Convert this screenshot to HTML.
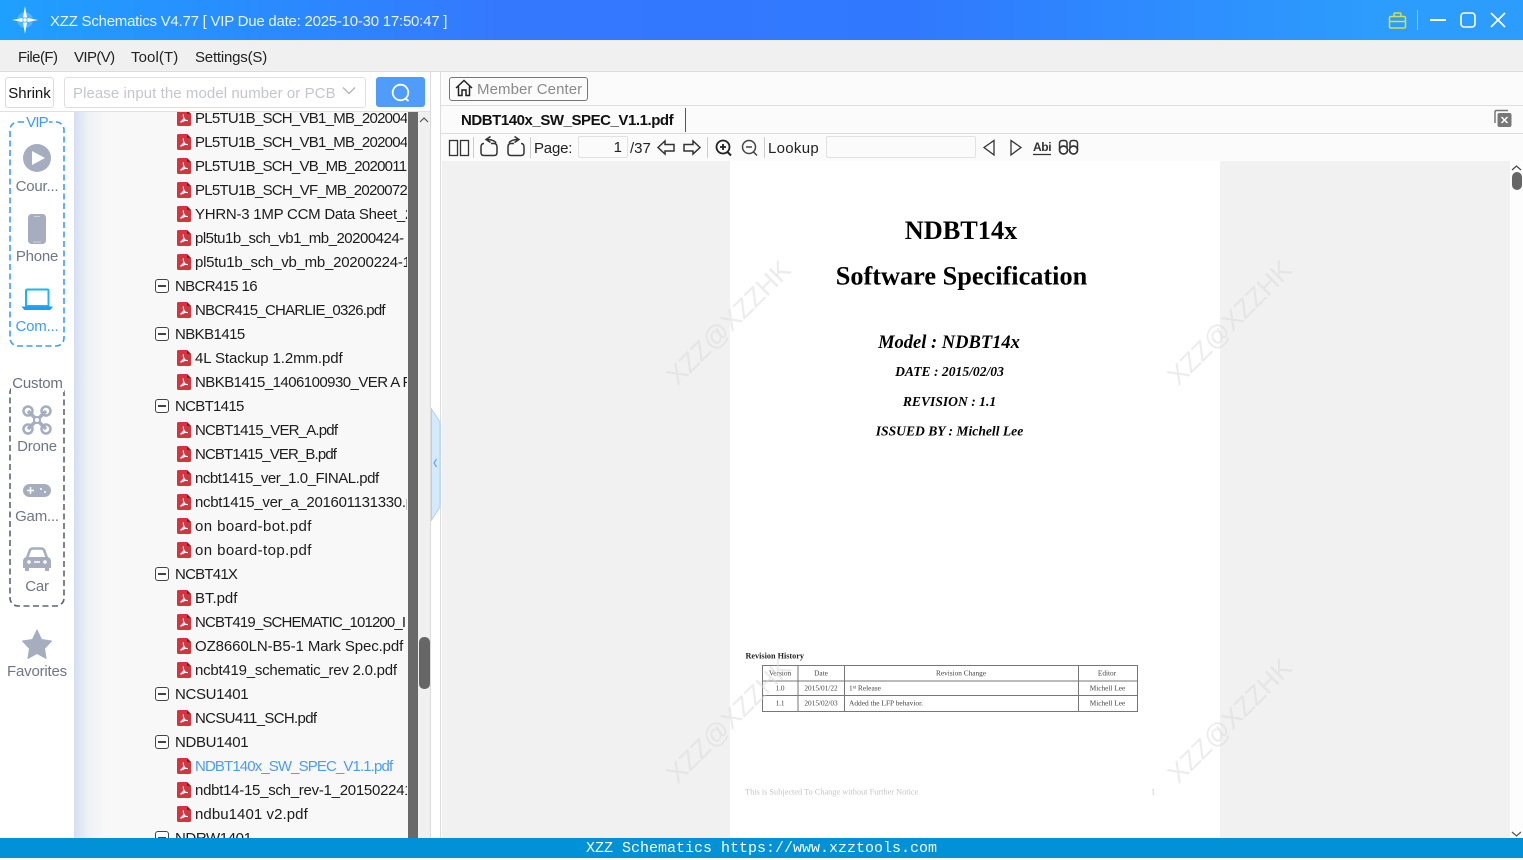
<!DOCTYPE html>
<html><head><meta charset="utf-8"><title>XZZ Schematics</title>
<style>
html,body{margin:0;padding:0;width:1523px;height:858px;overflow:hidden;background:#fff;font-family:"Liberation Sans","Noto Sans CJK SC",sans-serif;color:#222}
.a{position:absolute;white-space:nowrap}
#title{left:0;top:0;width:1523px;height:40px;background:linear-gradient(90deg,#1fa0fe 0,#3478fe 33%,#3079fe 60%,#2c9cfd 90%,#2c9cfd 100%)}
#tree{left:74px;top:112px;width:333px;height:726px;background:linear-gradient(90deg,#d3dff2 0,#eef1f6 14px,#f8f8f8 32px);overflow:hidden}
.r{position:absolute;left:0;right:0;height:24px;line-height:24px;font-size:15px;color:#1c1c1c;white-space:nowrap}
.r svg{position:absolute;left:103px;top:4px}
.r span{position:absolute;left:121px;top:1px;letter-spacing:-.2px}
.r.d span{left:101px}
.r.d i{position:absolute;left:81px;top:5px;width:12px;height:12px;border:1px solid #444;border-radius:3px;background:#fff}
.r.d i:after{content:"";position:absolute;left:2px;right:2px;top:5px;height:2px;background:#444}
.lbl{position:absolute;left:0;width:74px;text-align:center;font-size:15px;line-height:18px;color:#6f7686;letter-spacing:-.2px}
.tb{font-size:15px;color:#222}
</style></head><body>
<svg width="0" height="0" style="position:absolute"><symbol id="p" viewBox="0 0 14 16"><path d="M0 1.5Q0 0 1.5 0H10L14 4V14.500Q14 16 12.500 16H1.500Q0 16 0 14.500Z" fill="#d2353f"/><path d="M10 0V4H14Z" fill="#8e1a22"/><path d="M6.500 4.500Q6 6 7 8.500T11 10.500M7 8Q6.500 10 3.500 12M3.500 12.300L9 10" fill="none" stroke="#fff" stroke-width="1.200"/></symbol></svg>

<div class="a" id="title"></div>
<svg class="a" style="left:10px;top:5px" width="30" height="30" viewBox="0 0 30 30"><circle cx="15" cy="15" r="8" fill="#8fcbff" opacity=".45"/><path d="M15 1L17 12.500H13ZM15 29L13 17.500H17ZM2 15L12.500 13V17ZM28 15L17.500 17V13Z" fill="#fff"/><circle cx="15" cy="15" r="1.800" fill="#fff"/></svg>
<div class="a" style="left:50px;top:12px;font-size:15px;line-height:19px;color:#eaf4ff;letter-spacing:-.235px">XZZ Schematics V4.77 [ VIP Due date: 2025-10-30 17:50:47 ]</div>
<svg class="a" style="left:1385px;top:8px" width="130" height="24" viewBox="0 0 130 24" fill="none"><path d="M6 8.500H19Q20.500 8.500 20.500 10V18.500Q20.500 20 19 20H6Q4.500 20 4.500 18.500V10Q4.500 8.500 6 8.500ZM9 8.500V6Q9 5 10 5H15Q16 5 16 6V8.500M4.500 13.500H20.500M10 13.500H15" stroke="#d5e04b" stroke-width="1.500"/><path d="M32.500 2V22" stroke="#8cc6fb"/><path d="M45 12H61" stroke="#fff" stroke-width="2"/><rect x="76" y="5" width="14" height="14" rx="3" stroke="#fff" stroke-width="1.600"/><path d="M106 5L120 19M120 5L106 19" stroke="#fff" stroke-width="1.700"/></svg>

<div class="a" style="left:0;top:40px;width:1523px;height:31px;background:#f0f0f0;border-bottom:1px solid #dcdcdc"></div>
<div class="a" style="left:18px;top:49px;font-size:15px;line-height:18px;letter-spacing:-.55px">File(F)</div>
<div class="a" style="left:74px;top:49px;font-size:15px;line-height:18px;letter-spacing:-.6px">VIP(V)</div>
<div class="a" style="left:131px;top:49px;font-size:15px;line-height:18px;letter-spacing:.1px">Tool(T)</div>
<div class="a" style="left:195px;top:49px;font-size:15px;line-height:18px;letter-spacing:-.2px">Settings(S)</div>

<div class="a" style="left:0;top:111px;width:430px;height:1px;background:#e0e0e0"></div>
<div class="a" style="left:5px;top:77px;width:47px;height:29px;border:1px solid #dcdcdc;border-radius:3px;text-align:center;font-size:15px;line-height:31px;color:#111">Shrink</div>
<div class="a" style="left:64px;top:77px;width:300px;height:29px;border:1px solid #dfdfdf;border-radius:3px;font-size:15px;line-height:31px;color:#c4c6cc;text-indent:8px;letter-spacing:.07px">Please input the model number or PCB</div>
<svg class="a" style="left:342px;top:86px" width="14" height="10" viewBox="0 0 14 10" fill="none"><path d="M1 1.500L7 7.500L13 1.500" stroke="#b4b6bc" stroke-width="1.400"/></svg>
<div class="a" style="left:376px;top:77px;width:49px;height:30px;background:#4f9cfb;border-radius:3px"></div>
<svg class="a" style="left:390px;top:82px" width="22" height="21" viewBox="0 0 22 21" fill="none"><circle cx="10.500" cy="10.500" r="7.800" stroke="#fff" stroke-width="1.800"/><path d="M15.500 16.500L18.500 19" stroke="#fff" stroke-width="1.800"/></svg>

<!-- left rail -->
<svg class="a" style="left:0;top:112px" width="74" height="600" viewBox="0 112 74 600" fill="none">
<rect x="10" y="122" width="54" height="224" rx="8" stroke="#3a9dfa" stroke-width="1.600" stroke-dasharray="6 3.500"/>
<rect x="10" y="385" width="54" height="221" rx="8" stroke="#5e6472" stroke-width="1.600" stroke-dasharray="6 3.500"/>
<circle cx="37" cy="158" r="14" fill="#a5adbf"/><path d="M32 151V165L45 158Z" fill="#fff"/>
<rect x="28" y="214" width="18" height="30" rx="3.500" fill="#a5adbf"/><path d="M34 216.500H40M33 242H41" stroke="#cdd2dc"/>
<path d="M26 291Q26 289.500 27.500 289.500H47Q48.500 289.500 48.500 291V306H26Z" stroke="#1ab5f8" stroke-width="2"/><path d="M22.500 307H52L50 309.500H24.500Z" fill="#1f9cfb" stroke="#1f9cfb"/>
<g stroke="#a5adbf"><path d="M28 411L46 429M46 411L28 429" stroke-width="3.500"/><circle cx="28" cy="411" r="4.500" stroke-width="2.500"/><circle cx="46" cy="411" r="4.500" stroke-width="2.500"/><circle cx="28" cy="429" r="4.500" stroke-width="2.500"/><circle cx="46" cy="429" r="4.500" stroke-width="2.500"/><circle cx="37" cy="420" r="3" fill="#fff" stroke-width="2"/></g>
<rect x="23" y="484" width="28" height="13" rx="6.500" fill="#a5adbf"/><path d="M27 490.500H34M30.500 487V494" stroke="#fff" stroke-width="1.500"/><circle cx="41" cy="489" r="1" fill="#fff"/><circle cx="45" cy="492" r="1" fill="#fff"/>
<path d="M27 558L30 550Q31 548.500 33 548.500H41Q43 548.500 44 550L47 558" stroke="#a5adbf" stroke-width="2.500"/><path d="M23 562Q23 557 27 557H47Q51 557 51 562V568H49V571H45V568H29V571H25V568H23Z" fill="#a5adbf"/><circle cx="29" cy="562" r="1.800" fill="#fff"/><circle cx="45" cy="562" r="1.800" fill="#fff"/><path d="M34 562H40" stroke="#fff" stroke-width="1.500"/>
<path d="M37 630L41.500 639.500L51.500 641L44.500 648.500L46 658.500L37 653.500L28 658.500L29.500 648.500L22.500 641L32.500 639.500Z" fill="#a5adbf" stroke="#a5adbf" stroke-linejoin="round"/>
</svg>
<div class="a" style="left:25px;top:114px;width:24px;background:#fff;text-align:center;font-size:15px;line-height:17px;color:#3a9dfa;letter-spacing:-.8px">VIP</div>
<div class="a" style="left:11px;top:375px;width:53px;background:#fff;text-align:center;font-size:15px;line-height:17px;color:#6a7080;letter-spacing:-.2px">Custom</div>
<div class="lbl" style="top:178px">Cour...</div>
<div class="lbl" style="top:248px">Phone</div>
<div class="lbl" style="top:318px;color:#3a9dfa">Com...</div>
<div class="lbl" style="top:438px">Drone</div>
<div class="lbl" style="top:508px">Gam...</div>
<div class="lbl" style="top:578px">Car</div>
<div class="lbl" style="top:663px">Favorites</div>

<!-- tree -->
<div class="a" id="tree">
<div class="r" style="top:-6px"><svg width="14" height="16"><use href="#p"/></svg><span style="letter-spacing:-.74px">PL5TU1B_SCH_VB1_MB_20200417</span></div>
<div class="r" style="top:18px"><svg width="14" height="16"><use href="#p"/></svg><span style="letter-spacing:-.74px">PL5TU1B_SCH_VB1_MB_20200417</span></div>
<div class="r" style="top:42px"><svg width="14" height="16"><use href="#p"/></svg><span style="letter-spacing:-.74px">PL5TU1B_SCH_VB_MB_20200116</span></div>
<div class="r" style="top:66px"><svg width="14" height="16"><use href="#p"/></svg><span style="letter-spacing:-.72px">PL5TU1B_SCH_VF_MB_20200723</span></div>
<div class="r" style="top:90px"><svg width="14" height="16"><use href="#p"/></svg><span style="letter-spacing:-.25px">YHRN-3 1MP CCM Data Sheet_2</span></div>
<div class="r" style="top:114px"><svg width="14" height="16"><use href="#p"/></svg><span style="letter-spacing:-.5px">pl5tu1b_sch_vb1_mb_20200424-</span></div>
<div class="r" style="top:138px"><svg width="14" height="16"><use href="#p"/></svg><span style="letter-spacing:-.25px">pl5tu1b_sch_vb_mb_20200224-1</span></div>
<div class="r d" style="top:162px"><i></i><span style="letter-spacing:-.65px">NBCR415 16</span></div>
<div class="r" style="top:186px"><svg width="14" height="16"><use href="#p"/></svg><span style="letter-spacing:-.74px">NBCR415_CHARLIE_0326.pdf</span></div>
<div class="r d" style="top:210px"><i></i><span style="letter-spacing:-.575px">NBKB1415</span></div>
<div class="r" style="top:234px"><svg width="14" height="16"><use href="#p"/></svg><span style="letter-spacing:-.1px">4L Stackup 1.2mm.pdf</span></div>
<div class="r" style="top:258px"><svg width="14" height="16"><use href="#p"/></svg><span style="letter-spacing:-.55px">NBKB1415_1406100930_VER A F</span></div>
<div class="r d" style="top:282px"><i></i><span style="letter-spacing:-.7px">NCBT1415</span></div>
<div class="r" style="top:306px"><svg width="14" height="16"><use href="#p"/></svg><span style="letter-spacing:-.81px">NCBT1415_VER_A.pdf</span></div>
<div class="r" style="top:330px"><svg width="14" height="16"><use href="#p"/></svg><span style="letter-spacing:-.87px">NCBT1415_VER_B.pdf</span></div>
<div class="r" style="top:354px"><svg width="14" height="16"><use href="#p"/></svg><span style="letter-spacing:-.47px">ncbt1415_ver_1.0_FINAL.pdf</span></div>
<div class="r" style="top:378px"><svg width="14" height="16"><use href="#p"/></svg><span style="letter-spacing:-.3px">ncbt1415_ver_a_201601131330.pdf</span></div>
<div class="r" style="top:402px"><svg width="14" height="16"><use href="#p"/></svg><span style="letter-spacing:.42px">on board-bot.pdf</span></div>
<div class="r" style="top:426px"><svg width="14" height="16"><use href="#p"/></svg><span style="letter-spacing:.42px">on board-top.pdf</span></div>
<div class="r d" style="top:450px"><i></i><span style="letter-spacing:-.77px">NCBT41X</span></div>
<div class="r" style="top:474px"><svg width="14" height="16"><use href="#p"/></svg><span style="letter-spacing:-.03px">BT.pdf</span></div>
<div class="r" style="top:498px"><svg width="14" height="16"><use href="#p"/></svg><span style="letter-spacing:-.85px">NCBT419_SCHEMATIC_101200_I</span></div>
<div class="r" style="top:522px"><svg width="14" height="16"><use href="#p"/></svg><span style="letter-spacing:-.1px">OZ8660LN-B5-1 Mark Spec.pdf</span></div>
<div class="r" style="top:546px"><svg width="14" height="16"><use href="#p"/></svg><span style="letter-spacing:-.23px">ncbt419_schematic_rev 2.0.pdf</span></div>
<div class="r d" style="top:570px"><i></i><span style="letter-spacing:-.33px">NCSU1401</span></div>
<div class="r" style="top:594px"><svg width="14" height="16"><use href="#p"/></svg><span style="letter-spacing:-.67px">NCSU411_SCH.pdf</span></div>
<div class="r d" style="top:618px"><i></i><span style="letter-spacing:-.33px">NDBU1401</span></div>
<div class="r" style="top:642px"><svg width="14" height="16"><use href="#p"/></svg><span style="color:#4a9cf7;letter-spacing:-.88px">NDBT140x_SW_SPEC_V1.1.pdf</span></div>
<div class="r" style="top:666px"><svg width="14" height="16"><use href="#p"/></svg><span style="letter-spacing:-.27px">ndbt14-15_sch_rev-1_201502241</span></div>
<div class="r" style="top:690px"><svg width="14" height="16"><use href="#p"/></svg><span style="letter-spacing:.07px">ndbu1401 v2.pdf</span></div>
<div class="r d" style="top:714px"><i></i><span style="letter-spacing:-.4px">NDRW1401</span></div>
</div>

<!-- scrollbars / splitter -->
<div class="a" style="left:408px;top:112px;width:10px;height:726px;background:#696969"></div>
<div class="a" style="left:407px;top:112px;width:1px;height:726px;background:#f8f8f8"></div>
<div class="a" style="left:418px;top:112px;width:12px;height:726px;background:#f0f0f0"></div>
<svg class="a" style="left:418px;top:114px" width="12" height="10" fill="none"><path d="M2 8L6 4L10 8" stroke="#555" stroke-width="1.200"/></svg>
<div class="a" style="left:419px;top:637px;width:11px;height:52px;background:#666;border-radius:5px"></div>
<div class="a" style="left:430px;top:72px;width:1px;height:766px;background:#dcdcdc"></div>
<div class="a" style="left:440px;top:72px;width:1px;height:766px;background:#dcdcdc"></div>
<svg class="a" style="left:431px;top:408px" width="10" height="114" viewBox="0 0 10 114"><path d="M0.500 1L9 14V99L0.500 112Z" fill="#d5e9fd" stroke="#aad3fa"/><path d="M5.500 51L3 55L5.500 59" fill="none" stroke="#5aaaf5" stroke-width="1.200"/></svg>

<!-- viewer -->
<div class="a" style="left:441px;top:72px;width:1082px;height:89px;background:#fbfbfb"></div>
<div class="a" style="left:441px;top:105px;width:1082px;height:1px;background:#dedede"></div>
<div class="a" style="left:441px;top:133px;width:1082px;height:1px;background:#dedede"></div>
<div class="a" style="left:449px;top:77px;width:137px;height:22px;border:1px solid #777;border-radius:3px"></div>
<svg class="a" style="left:454px;top:78px" width="20" height="20" viewBox="0 0 20 20" fill="none"><path d="M2 10L10 2.500L18 10M4.500 8.500V17.500H8V12H12V17.500H15.500V8.500" stroke="#222" stroke-width="1.500"/></svg>
<div class="a" style="left:477px;top:80px;font-size:15px;line-height:19px;color:#8a8a8a;letter-spacing:.08px">Member Center</div>
<div class="a" style="left:461px;top:111px;font-size:15px;line-height:20px;font-weight:bold;color:#111;letter-spacing:-.45px">NDBT140x_SW_SPEC_V1.1.pdf</div>
<div class="a" style="left:685px;top:108px;width:1px;height:24px;background:#555"></div>
<svg class="a" style="left:1493px;top:109px" width="20" height="20" viewBox="0 0 20 20" fill="none"><path d="M2 14V3Q2 1.500 3.500 1.500H15" stroke="#777" stroke-width="1.500"/><rect x="4.500" y="4" width="14" height="14" rx="2" fill="#777"/><path d="M8.500 8L14.500 14M14.500 8L8.500 14" stroke="#fff" stroke-width="1.500"/></svg>

<svg class="a" style="left:442px;top:134px" width="680" height="27" viewBox="442 134 680 27" fill="none" stroke="#333" stroke-width="1.300">
<rect x="449.500" y="140.500" width="8" height="15"/><rect x="460.500" y="140.500" width="8" height="15"/>
<path d="M473.500 137V158M530.500 137V158" stroke="#ccc" stroke-width="1"/>
<path d="M481 147Q481 143.500 484 143.500M491 143.500H494Q497 143.500 497 147V152.500Q497 155.500 494 155.500H484Q481 155.500 481 152.500V147" stroke-width="1.500"/><path d="M496 143Q494 139.500 487 139.500M490.500 136.500L486 139.500L490.500 142.500" stroke-width="1.500"/>
<path d="M508 147Q508 143.500 511 143.500H514M521 143.500Q524 143.500 524 147V152.500Q524 155.500 521 155.500H511Q508 155.500 508 152.500V147" stroke-width="1.500"/><path d="M509 143Q511 139.500 518 139.500M514.500 136.500L519 139.500L514.500 142.500" stroke-width="1.500"/>
<path d="M658 147.500L665 141V144.500H674V151H665V154Z" stroke-width="1.500"/><path d="M700 147.500L693 141V144.500H684V151H693V154Z" stroke-width="1.500"/>
<path d="M707.500 137V158M764.500 137V158" stroke="#ccc" stroke-width="1"/>
<circle cx="723" cy="147" r="6.500" stroke-width="1.800" stroke="#222"/><path d="M727.500 152L731 155.500" stroke-width="2" stroke="#222"/><path d="M720 147H726M723 144V150" stroke-width="1.800" stroke="#222"/>
<circle cx="749" cy="147" r="6.500" stroke-width="1.500" stroke="#444"/><path d="M753.500 152L757 155.500M746 147H752" stroke-width="1.500" stroke="#444"/>
<path d="M994 140.500V155L984 147.500Z"/><path d="M1011 140.500V155L1021 147.500Z"/>
<path d="M1033 154.500H1051" stroke-width="1.300"/>
<circle cx="1063.500" cy="150" r="4" stroke-width="1.700"/><circle cx="1073.500" cy="150" r="4" stroke-width="1.700"/><path d="M1059.500 150V143.500Q1059.500 140.500 1062.500 140.500H1064.500Q1067 140.500 1067 143.500V148M1070 148V143.500Q1070 140.500 1072.500 140.500H1074.500Q1077.500 140.500 1077.500 143.500V150" stroke-width="1.500"/>
</svg>
<div class="a" style="left:1033px;top:141px;font-size:12px;line-height:13px;font-weight:bold;color:#333;letter-spacing:-.4px">Abi</div>
<div class="a tb" style="left:534px;top:139px;line-height:19px;letter-spacing:-.2px">Page:</div>
<div class="a" style="left:578px;top:136px;width:43px;height:20px;border:1px solid #e2e2e2;border-radius:2px;background:#fbfbfb;text-align:right;padding-right:5px;font-size:15px;line-height:22px">1</div>
<div class="a tb" style="left:630px;top:139px;line-height:19px">/37</div>
<div class="a tb" style="left:768px;top:139px;line-height:19px;letter-spacing:.3px">Lookup</div>
<div class="a" style="left:826px;top:136px;width:148px;height:20px;border:1px solid #e2e2e2;border-radius:2px;background:#fbfbfb"></div>

<div class="a" style="left:442px;top:161px;width:1068px;height:677px;background:#f1f1f1"></div>
<div class="a" style="left:1510px;top:161px;width:13px;height:677px;background:#fdfdfd"></div>
<svg class="a" style="left:1510px;top:163px" width="13" height="10" fill="none"><path d="M2 7L6.500 3L11 7" stroke="#444" stroke-width="1.200"/></svg>
<div class="a" style="left:1512px;top:172px;width:10px;height:18px;background:#666;border-radius:5px"></div>
<svg class="a" style="left:1510px;top:830px" width="13" height="8" fill="none"><path d="M2 2L6.500 6L11 2" stroke="#555" stroke-width="1.200"/></svg>

<div class="a" style="left:730px;top:161px;width:490px;height:677px;background:#fff"></div>
<svg class="a" style="left:730px;top:161px" width="490" height="677" viewBox="730 161 490 677" font-family="Liberation Serif, serif" fill="#000">
<text x="961" y="239" font-size="26.300" font-weight="bold" text-anchor="middle">NDBT14x</text>
<text x="961.500" y="284.500" font-size="26.300" font-weight="bold" text-anchor="middle">Software Specification</text>
<g font-weight="bold" font-style="italic" text-anchor="middle">
<text x="949" y="348" font-size="18.500">Model : NDBT14x</text>
<text x="949.500" y="376" font-size="13.600">DATE : 2015/02/03</text>
<text x="949.500" y="406" font-size="13.600">REVISION : 1.1</text>
<text x="949.500" y="435.500" font-size="13.600">ISSUED BY : Michell Lee</text>
</g>
<text x="745.500" y="658.500" font-size="8.200" font-weight="bold" fill="#222">Revision History</text>
<g stroke="#777" fill="none"><rect x="762.500" y="665.500" width="375" height="46"/><path d="M798 665V711M844.500 665V711M1078.500 665V711M762 681H1137M762 695.500H1137"/></g>
<g font-size="7.300" fill="#444" text-anchor="middle">
<text x="780" y="675.500">Version</text><text x="821" y="675.500">Date</text><text x="961" y="675.500">Revision Change</text><text x="1107" y="675.500">Editor</text>
<text x="780" y="690.500">1.0</text><text x="821" y="690.500">2015/01/22</text><text x="1107.500" y="690.500">Michell Lee</text>
<text x="780" y="705.500">1.1</text><text x="821" y="705.500">2015/02/03</text><text x="1107.500" y="705.500">Michell Lee</text>
</g>
<g font-size="7.400" fill="#444"><text x="849" y="690.500">1<tspan font-size="5" dy="-2">st</tspan><tspan dy="2"> Release</tspan></text><text x="849" y="705.500">Added the LFP behavior.</text></g>
<g font-size="8.300" fill="#c4c4c4"><text x="745" y="794.500">This is Subjected To Change without Further Notice</text><text x="1151" y="794.500">1</text></g>
</svg>
<svg class="a" style="left:442px;top:161px" width="1068" height="677" viewBox="442 161 1068 677" font-family="Liberation Sans, sans-serif" font-size="26.300" fill="#d9d9d9" fill-opacity=".5" text-anchor="middle">
<text transform="translate(735 329) rotate(-45)">XZZ@XZZHK</text>
<text transform="translate(1236 329) rotate(-45)">XZZ@XZZHK</text>
<text transform="translate(735 727) rotate(-45)">XZZ@XZZHK</text>
<text transform="translate(1236 727) rotate(-45)">XZZ@XZZHK</text>
</svg>

<div class="a" style="left:0;top:838px;width:1523px;height:20px;background:#0091d6;color:#fff;text-align:center;font-family:'Liberation Mono',monospace;font-size:15px;line-height:22px">XZZ Schematics https://www.xzztools.com</div>
</body></html>
